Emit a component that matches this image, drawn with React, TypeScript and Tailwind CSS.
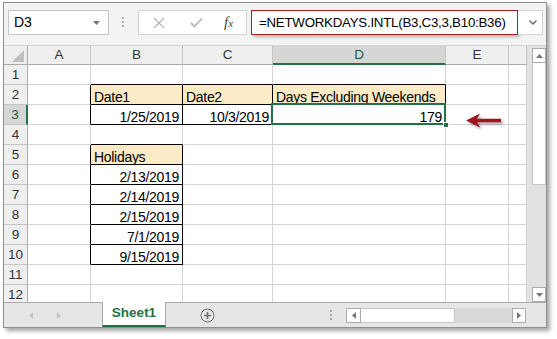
import React from 'react';

type Cell = { text: string; right?: boolean; fill?: boolean };

// row-col keys, col 1 = A
const cells: Record<string, Cell> = {
  '2-2': { text: 'Date1', fill: true },
  '2-3': { text: 'Date2', fill: true },
  '2-4': { text: 'Days Excluding Weekends', fill: true },
  '3-2': { text: '1/25/2019', right: true },
  '3-3': { text: '10/3/2019', right: true },
  '3-4': { text: '179', right: true },
  '5-2': { text: 'Holidays', fill: true },
  '6-2': { text: '2/13/2019', right: true },
  '7-2': { text: '2/14/2019', right: true },
  '8-2': { text: '2/15/2019', right: true },
  '9-2': { text: '7/1/2019', right: true },
  '10-2': { text: '9/15/2019', right: true },
};

const boxed = new Set(['2-2', '2-3', '2-4', '3-2', '3-3', '3-4', '5-2', '6-2', '7-2', '8-2', '9-2', '10-2']);
const isBoxed = (r: number, c: number) => boxed.has(`${r}-${c}`);

const colHeads = ['A', 'B', 'C', 'D', 'E', ''];
const rows = Array.from({ length: 12 }, (_, i) => i + 1);

function Arrow() {
  return (
    <svg width="36" height="15" viewBox="0 0 36 15" className="drop-shadow-[2px_2px_1.5px_rgba(0,0,0,0.35)]">
      <path d="M0 7.5 L14 0.5 L11 5.7 L35 5.7 L35 9.3 L11 9.3 L14 14.5 Z" fill="#9c1520" />
    </svg>
  );
}

function GridCell({ r, c }: { r: number; c: number }) {
  const cell = cells[`${r}-${c}`];
  const rightBlack = isBoxed(r, c) || isBoxed(r, c + 1);
  const bottomBlack = isBoxed(r, c) || isBoxed(r + 1, c);
  const selected = r === 3 && c === 4;
  return (
    <div
      className={`relative flex items-center border-r border-b px-[3px] pt-[4px] text-[14px] leading-[16px] tracking-[-0.3px] text-black whitespace-nowrap ${
        rightBlack ? 'border-r-black' : 'border-r-[#d4d4d4]'
      } ${bottomBlack ? 'border-b-black' : 'border-b-[#d4d4d4]'} ${cell?.fill ? 'bg-[#fdebc8]' : ''} ${
        cell?.right ? 'justify-end' : 'justify-start'
      }`}
    >
      {cell?.text}
      {selected && (
        <>
          <div className="absolute left-[-2px] top-[-2px] right-[-1px] bottom-[-1px] z-10 border-2 border-[#217346]" />
          <div className="absolute right-[-4px] bottom-[-4px] z-20 h-[6px] w-[6px] border border-white bg-[#217346]" />
        </>
      )}
      {r === 3 && c === 5 && (
        <div className="absolute left-[20px] top-[8px] z-20">
          <Arrow />
        </div>
      )}
    </div>
  );
}

export default function App() {
  return (
    <div className="h-[339px] w-[557px] overflow-hidden bg-white pl-[3px] pt-[2px] font-['Liberation_Sans',Arial,sans-serif]">
      <div className="flex h-[326px] w-[544px] flex-col border border-[#8e8e8e] shadow-[3px_3px_4px_rgba(0,0,0,0.35)]">
        {/* formula bar */}
        <div className="flex h-[43px] items-start border-b border-[#d4d4d4] bg-[#f3f3f3] pl-[4px] pt-[7px]">
          <div className="flex h-[25px] w-[101px] items-center justify-between border border-[#c6c6c6] bg-white pl-[5px] pr-[8px] text-[14px] text-black">
            <span>D3</span>
            <svg width="7" height="4" viewBox="0 0 7 4">
              <path d="M0 0 L7 0 L3.5 4 Z" fill="#777" />
            </svg>
          </div>
          <div className="ml-[13px] mt-[7px] flex flex-col gap-[2px]">
            <div className="h-[2px] w-[2px] bg-[#b4b4b4]" />
            <div className="h-[2px] w-[2px] bg-[#b4b4b4]" />
            <div className="h-[2px] w-[2px] bg-[#b4b4b4]" />
          </div>
          <div className="ml-[14px] flex h-[25px] w-[109px] items-center border border-[#d4d4d4] bg-white pl-[14px]">
            <svg width="12" height="12" viewBox="0 0 12 12">
              <path d="M1 1 L11 11 M11 1 L1 11" stroke="#b8b8b8" strokeWidth="1.4" />
            </svg>
            <svg width="13" height="11" viewBox="0 0 13 11" className="ml-[25px]">
              <path d="M1 6 L4.5 9.5 L12 1.5" stroke="#b8b8b8" strokeWidth="1.8" fill="none" />
            </svg>
            <span className="ml-[21px] font-['Liberation_Serif',serif] text-[15px] italic text-[#444]">
              f<span className="text-[11px]">x</span>
            </span>
          </div>
          <div className="ml-[4px] flex h-[25px] w-[267px] items-center border border-[#a31f24] bg-white pl-[7px] text-[13.3px] tracking-[-0.25px] text-black shadow-[2px_2px_3px_rgba(0,0,0,0.25)]">
            =NETWORKDAYS.INTL(B3,C3,3,B10:B36)
          </div>
          <div className="flex h-[25px] w-[25px] items-center border border-l-0 border-[#d4d4d4] bg-white pl-[11px]">
            <svg width="8" height="5" viewBox="0 0 8 5">
              <path d="M0.5 0.5 L4 4 L7.5 0.5" stroke="#666" strokeWidth="1.4" fill="none" />
            </svg>
          </div>
        </div>

        {/* sheet */}
        <div className="flex h-[256px]">
          <div className="grid h-[256px] w-[523px] grid-cols-[24px_63px_92px_90px_173px_63px_18px] grid-rows-[19px_repeat(12,20px)] overflow-hidden">
            <div className="relative border-r border-b border-r-[#ababab] border-b-[#ababab] bg-[#efefef]">
              <svg width="12" height="12" viewBox="0 0 12 12" className="absolute right-[3px] bottom-[2px]">
                <path d="M12 0 L12 12 L0 12 Z" fill="#c0c0c0" />
              </svg>
            </div>
            {colHeads.map((h, i) => (
              <div
                key={i}
                className={`flex items-center justify-center border-r border-r-[#c6c6c6] pt-[1px] text-[13.5px] ${
                  h === 'D'
                    ? 'border-b-2 border-b-[#217346] bg-[#d6d6d6] text-[#1d5e3a]'
                    : 'border-b border-b-[#ababab] bg-[#efefef] text-[#333]'
                }`}
              >
                {h}
              </div>
            ))}
            {rows.map((r) => (
              <React.Fragment key={r}>
                <div
                  className={`flex items-center justify-center border-b border-b-[#c6c6c6] pt-[2px] text-[13.5px] ${
                    r === 3
                      ? 'border-r-2 border-r-[#217346] bg-[#d6d6d6] text-[#1d5e3a]'
                      : 'border-r border-r-[#ababab] bg-[#efefef] text-[#333]'
                  }`}
                >
                  {r}
                </div>
                {[1, 2, 3, 4, 5, 6].map((c) => (
                  <GridCell key={c} r={r} c={c} />
                ))}
              </React.Fragment>
            ))}
          </div>
          {/* vertical scrollbar */}
          <div className="flex w-[19px] flex-col bg-[#e2e2e2] pl-[5px] pt-[2px]">
            <div className="flex h-[15px] items-center justify-center border border-[#ababab] bg-white">
              <svg width="7" height="4" viewBox="0 0 7 4">
                <path d="M0 4 L7 4 L3.5 0 Z" fill="#777" />
              </svg>
            </div>
            <div className="h-[122px] border-x border-b border-[#c6c6c6] bg-white" />
            <div className="flex-1" />
            <div className="flex h-[15px] items-center justify-center border border-[#ababab] bg-white">
              <svg width="7" height="4" viewBox="0 0 7 4">
                <path d="M0 0 L7 0 L3.5 4 Z" fill="#777" />
              </svg>
            </div>
          </div>
        </div>

        {/* sheet tabs */}
        <div className="flex h-[25px] items-center border-t border-[#ababab] bg-[#e6e6e6]">
          <svg width="4" height="7" viewBox="0 0 4 7" className="ml-[25px]">
            <path d="M4 0 L4 7 L0 3.5 Z" fill="#c4c4c4" />
          </svg>
          <svg width="4" height="7" viewBox="0 0 4 7" className="ml-[24px]">
            <path d="M0 0 L0 7 L4 3.5 Z" fill="#c4c4c4" />
          </svg>
          <div className="-mt-px ml-[41px] flex h-[25px] w-[64px] items-center justify-center self-start border-x border-b-2 border-x-[#ababab] border-b-[#217346] bg-white text-[13.5px] font-bold text-[#217346]">
            Sheet1
          </div>
          <svg width="15" height="15" viewBox="0 0 15 15" className="ml-[34px]">
            <circle cx="7.5" cy="7.5" r="6.5" stroke="#6f6f6f" strokeWidth="1" fill="none" />
            <path d="M7.5 4 L7.5 11 M4 7.5 L11 7.5" stroke="#6f6f6f" strokeWidth="1.6" />
          </svg>
          <div className="ml-[115px] flex flex-col gap-[2px]">
            <div className="h-[2px] w-[2px] bg-[#a8a8a8]" />
            <div className="h-[2px] w-[2px] bg-[#a8a8a8]" />
            <div className="h-[2px] w-[2px] bg-[#a8a8a8]" />
          </div>
          <div className="ml-[14px] flex h-[15px]">
            <div className="flex w-[15px] items-center justify-center border border-[#ababab] bg-white">
              <svg width="4" height="7" viewBox="0 0 4 7">
                <path d="M4 0 L4 7 L0 3.5 Z" fill="#777" />
              </svg>
            </div>
            <div className="w-[94px] border-y border-r border-[#c6c6c6] bg-white" />
            <div className="w-[57px] bg-[#d9d9d9]" />
            <div className="flex w-[14px] items-center justify-center border border-[#ababab] bg-white">
              <svg width="4" height="7" viewBox="0 0 4 7">
                <path d="M0 0 L0 7 L4 3.5 Z" fill="#777" />
              </svg>
            </div>
          </div>
        </div>
      </div>
    </div>
  );
}
